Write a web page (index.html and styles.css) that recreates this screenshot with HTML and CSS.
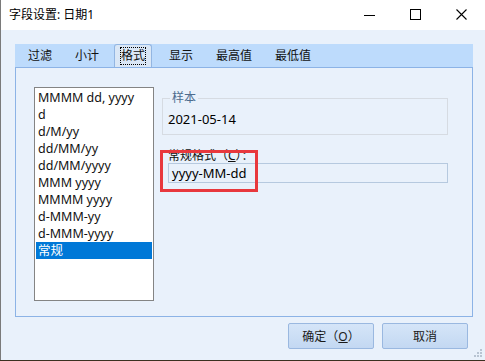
FILE: index.html
```html
<!DOCTYPE html>
<html>
<head>
<meta charset="utf-8">
<link rel="stylesheet" href="styles.css">
</head>
<body>
<div class="window">
  <div class="titlebar">
    <div class="title">字段设置: 日期1</div>
    <div class="controls">
      <span class="ctl"><svg width="12" height="12" viewBox="0 0 12 12"><path d="M0 6.5H11" stroke="#000" stroke-width="1"/></svg></span>
      <span class="ctl"><svg width="12" height="12" viewBox="0 0 12 12"><rect x="0.5" y="0.5" width="10" height="10" fill="none" stroke="#000" stroke-width="1"/></svg></span>
      <span class="ctl"><svg width="12" height="12" viewBox="0 0 12 12"><path d="M0.5 0.5L10.5 10.5M10.5 0.5L0.5 10.5" stroke="#000" stroke-width="1.1"/></svg></span>
    </div>
  </div>
  <div class="client">
    <div class="tabs">
      <span class="tab">过滤</span>
      <span class="tab">小计</span>
      <span class="tab active"><span class="focus">格式</span></span>
      <span class="tab">显示</span>
      <span class="tab">最高值</span>
      <span class="tab">最低值</span>
    </div>
    <div class="panel">
      <ul class="list">
        <li>MMMM dd, yyyy</li>
        <li>d</li>
        <li>d/M/yy</li>
        <li>dd/MM/yy</li>
        <li>dd/MM/yyyy</li>
        <li>MMM yyyy</li>
        <li>MMMM yyyy</li>
        <li>d-MMM-yy</li>
        <li>d-MMM-yyyy</li>
        <li class="sel">常规</li>
      </ul>
      <div class="side">
        <fieldset class="sample">
          <legend>样本</legend>
          <div class="sample-val">2021-05-14</div>
        </fieldset>
        <div class="fmt">
          <div class="fmt-label">常规格式（<u>C</u>）：</div>
          <div class="fmt-input">yyyy-MM-dd</div>
          <div class="highlight"></div>
        </div>
      </div>
    </div>
    <div class="buttons">
      <button class="btn">确定（<u>O</u>）</button>
      <button class="btn">取消</button>
    </div>
    <div class="grip"><svg width="9" height="9" viewBox="0 0 9 9"><g fill="#b8c4d2"><rect x="6" y="0" width="2" height="2"/><rect x="3" y="3" width="2" height="2"/><rect x="6" y="3" width="2" height="2"/><rect x="0" y="6" width="2" height="2"/><rect x="3" y="6" width="2" height="2"/><rect x="6" y="6" width="2" height="2"/></g></svg></div>
  </div>
</div>
</body>
</html>
```

FILE: styles.css
```css
* { box-sizing: border-box; }
html, body { margin: 0; padding: 0; }
body {
  width: 485px;
  height: 361px;
  overflow: hidden;
  font-family: "Noto Sans", "Noto Sans CJK SC", sans-serif;
  font-size: 12px;
  color: #000;
  background: #3a3020;
}
.window {
  width: 485px;
  height: 360px;
  border-left: 1px solid #7a7a7a;
  display: flex;
  flex-direction: column;
  background: #e9f1fb;
}
.titlebar {
  height: 30px;
  background: #fff;
  display: flex;
  align-items: center;
  justify-content: space-between;
  padding-left: 8px;
}
.title {
  font-size: 12px;
  line-height: 16px;
  padding-bottom: 1px;
}
.controls { display: flex; height: 30px; }
.ctl {
  width: 46px;
  height: 30px;
  display: flex;
  align-items: center;
  justify-content: center;
}
.client {
  position: relative;
  flex: 1;
  padding: 14px 12px 0 14px;
  display: flex;
  flex-direction: column;
}
.tabs {
  height: 23px;
  background: #bddbfc;
  display: flex;
  align-items: flex-end;
  padding-left: 1px;
}
.tab {
  height: 22px;
  padding: 0 11px 0 12px;
  display: flex;
  align-items: center;
  line-height: 14px;
  color: #111;
}
.tab.active {
  height: 23px;
  background: #dae7f6;
  border: 1px solid #93b6e2;
  border-bottom: none;
  border-radius: 3px 3px 0 0;
  padding: 0 5px 0 5px;
  margin: 0 5px 0 4px;
}
.focus {
  border: 1px dotted #000;
  padding: 1px 0;
}
.panel {
  height: 250px;
  border: 1px solid #8cb3e6;
  display: flex;
  padding: 19px 0 0 18px;
  gap: 8px;
}
.list {
  list-style: none;
  margin: 0;
  width: 120px;
  height: 214px;
  border: 1px solid #848484;
  background: #fff;
  padding: 1px 1px;
  font-size: 12.5px;
}
.list li {
  height: 17px;
  line-height: 17px;
  padding-left: 2px;
  white-space: nowrap;
  color: #111;
}
.list li.sel {
  background: #0078d7;
  color: #fff;
}
.side {
  width: 286px;
  display: flex;
  flex-direction: column;
}
.sample {
  margin: 5px 0 0 0;
  padding: 0 6px 4px 5px;
  border: 1px solid #d6dbe2;
  height: 43px;
}
.sample legend {
  padding: 0 2px;
  margin-left: 2px;
  color: #4d6c8f;
  font-size: 12px;
  line-height: 12px;
}
.sample-val {
  font-size: 13px;
  line-height: 16px;
  margin-top: 7px;
}
.fmt {
  position: relative;
  margin-top: 14px;
  padding-left: 6px;
}
.fmt-label {
  font-size: 12px;
  line-height: 14px;
  color: #111;
}
.fmt-input {
  width: 280px;
  height: 20px;
  border: 1px solid #b6c9df;
  background: #e9f1fb;
  font-size: 13px;
  line-height: 18px;
  padding-left: 3px;
}
.highlight {
  position: absolute;
  left: -2px;
  top: 1px;
  width: 98px;
  height: 42px;
  border: 3px solid #e8383d;
}
.buttons {
  display: flex;
  justify-content: flex-end;
  gap: 8px;
  margin-top: 6px;
  padding-right: 5px;
}
.btn {
  width: 86px;
  height: 26px;
  border: 1px solid #9ab8e0;
  border-radius: 2px;
  background: linear-gradient(#d5e5f8, #c3d8f2);
  font-family: "Noto Sans", "Noto Sans CJK SC", sans-serif;
  font-size: 12px;
  color: #1a1a1a;
  padding: 0;
}
.grip {
  position: absolute;
  right: 2px;
  bottom: 2px;
  width: 9px;
  height: 9px;
  display: flex;
}
```
